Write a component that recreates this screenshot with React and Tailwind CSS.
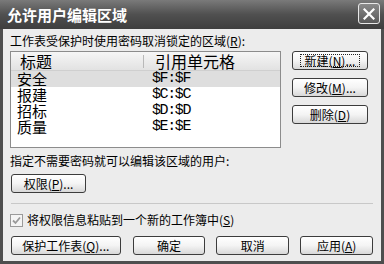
import React from 'react';

const cjk = { fontFamily: '"Noto Sans CJK SC", "Liberation Sans", sans-serif' };

function Btn({ children, className = '', focus = false }) {
  return (
    <div
      className={`h-[19px] rounded-[3px] border border-[#3c3c3c] bg-gradient-to-b from-[#ffffff] via-[#f4f4f4] to-[#d8d8d8] flex items-center justify-center text-[12px] leading-none text-black ${className}`}
    >
      {focus ? (
        <div className="border border-dotted border-[#222] px-[4px] h-[13px] flex items-center">{children}</div>
      ) : (
        children
      )}
    </div>
  );
}

const rows = [
  ['安全', '$F:$F', true],
  ['报建', '$C:$C', false],
  ['招标', '$D:$D', false],
  ['质量', '$E:$E', false],
];

export default function App() {
  return (
    <div className="w-[384px] h-[264px] bg-[#4e4e4e] flex flex-col overflow-hidden" style={cjk}>
      {/* title bar */}
      <div className="h-[29px] shrink-0 bg-gradient-to-b from-[#7a7a7a] via-[#505050] to-[#3e3e3e] flex items-center pl-[7px] pr-[4px]">
        <span className="text-white font-bold text-[15px] leading-none flex-1">允许用户编辑区域</span>
        <div className="w-[22px] h-[21px] rounded-[3px] border border-[#e8e8e8] bg-gradient-to-b from-[#8a8a8a] to-[#5a5a5a] flex items-center justify-center mb-[2px]">
          <svg width="12" height="12" viewBox="0 0 12 12">
            <path d="M1.5 1.5 L10.5 10.5 M10.5 1.5 L1.5 10.5" stroke="#fff" strokeWidth="2.2" strokeLinecap="square" />
          </svg>
        </div>
      </div>

      {/* body */}
      <div className="flex-1 mx-[3px] mb-[3px] bg-[#ececec] flex flex-col pl-[7px] pr-[8px] pt-[5px]">
        <div className="text-[12px] leading-[14px] text-black">
          工作表受保护时使用密码取消锁定的区域(<u>R</u>):
        </div>

        <div className="flex mt-[3px]">
          <div className="w-[271px] h-[97px] border border-[#8c8c8c] bg-white flex flex-col">
            <div className="h-[19px] bg-gradient-to-b from-[#f6f6f6] to-[#e2e2e2] border-b border-[#cfcfcf] flex items-center text-[16px] leading-none text-black">
              <span className="w-[132px] pl-[9px]">标题</span>
              <span className="w-[1px] h-[13px] bg-[#b8b8b8]" />
              <span className="pl-[11px]">引用单元格</span>
            </div>
            {rows.map(([name, ref, sel]) => (
              <div
                key={name}
                className={`h-[16px] flex items-center text-[15px] leading-[16px] text-black ${sel ? 'bg-[#dedede]' : ''}`}
              >
                <span className="w-[141px] pl-[6px]">{name}</span>
                <span className="tracking-[-1.4px]" style={{ fontFamily: '"Liberation Mono", monospace' }}>
                  {ref}
                </span>
              </div>
            ))}
          </div>

          <div className="ml-[11px] flex flex-col gap-[8px]">
            <Btn className="w-[76px]" focus>
              新建(<u>N</u>)...
            </Btn>
            <Btn className="w-[76px]">
              修改(<u>M</u>)...
            </Btn>
            <Btn className="w-[76px]">
              删除(<u>D</u>)
            </Btn>
          </div>
        </div>

        <div className="text-[12px] leading-[14px] text-black mt-[6px]">指定不需要密码就可以编辑该区域的用户:</div>

        <div className="mt-[6px] pl-[1px]">
          <Btn className="w-[75px]">
            权限(<u>P</u>)...
          </Btn>
        </div>

        <div className="mt-[10px] ml-[1px] h-[1px] bg-[#c8c8c8]" />

        <div className="mt-[9px] flex items-center text-[12px] leading-[14px] text-black">
          <div className="w-[13px] h-[13px] border border-[#9a9a9a] bg-[#f4f4f4] flex items-center justify-center">
            <svg width="9" height="9" viewBox="0 0 9 9">
              <path d="M1 4.5 L3.5 7 L8 1.5" stroke="#9a9a9a" strokeWidth="1.8" fill="none" />
            </svg>
          </div>
          <span className="ml-[4px]">
            将权限信息粘贴到一个新的工作簿中(<u>S</u>)
          </span>
        </div>

        <div className="mt-[9px] flex pl-[1px]">
          <Btn className="w-[110px]">
            保护工作表(<u>Q</u>)...
          </Btn>
          <Btn className="w-[73px] ml-[12px]">确定</Btn>
          <Btn className="w-[73px] ml-[11px]">取消</Btn>
          <Btn className="w-[73px] ml-[11px]">
            应用(<u>A</u>)
          </Btn>
        </div>
      </div>
    </div>
  );
}
